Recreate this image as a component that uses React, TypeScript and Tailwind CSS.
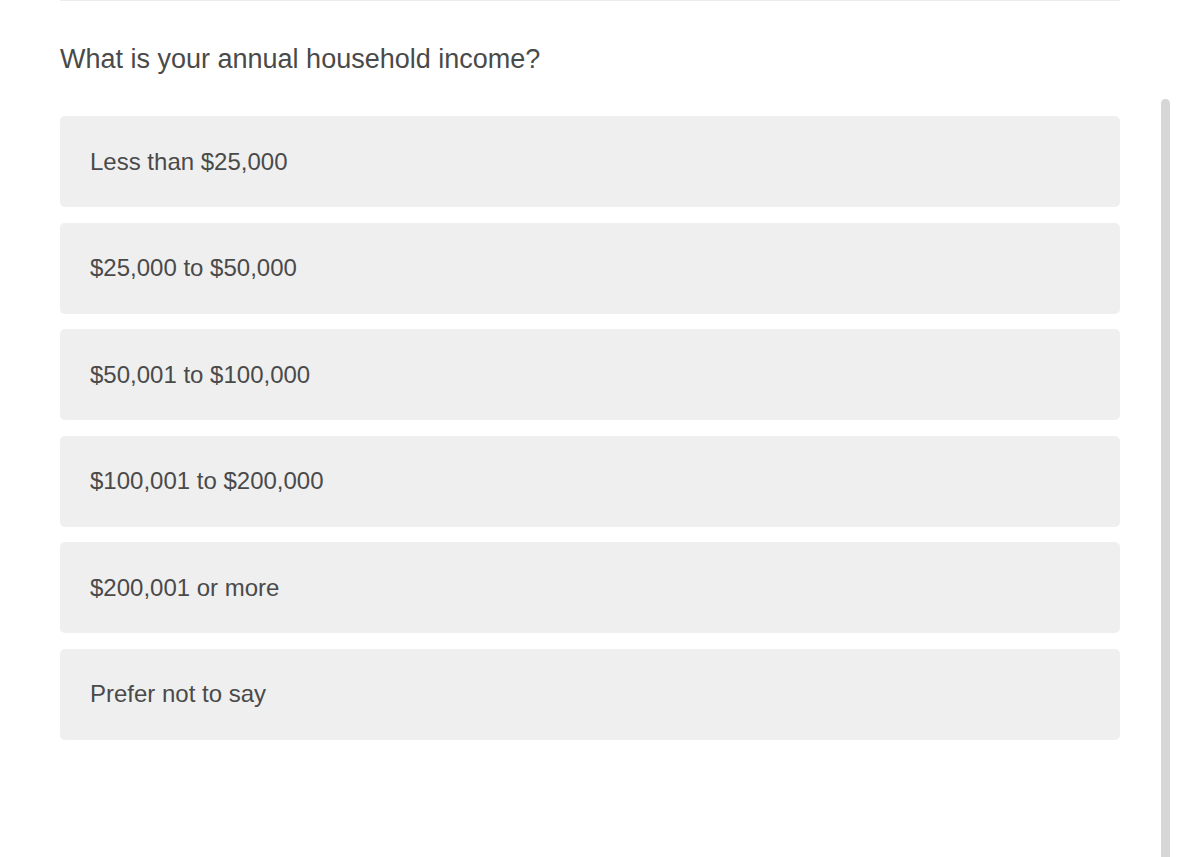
import React from "react";

const options = [
  "Less than $25,000",
  "$25,000 to $50,000",
  "$50,001 to $100,000",
  "$100,001 to $200,000",
  "$200,001 or more",
  "Prefer not to say",
];

export default function App() {
  return (
    <div
      className="relative h-[857px] w-[1179px] overflow-hidden bg-white"
      style={{ fontFamily: '"Liberation Sans", Arial, sans-serif' }}
    >
      <div className="ml-[60px] w-[1060px]">
        <div className="h-px bg-[#ececec]" />
        <h1 className="mt-[42px] text-[27px] leading-[32px] text-[#4a4a4a]">
          What is your annual household income?
        </h1>
        <div className="mt-[41px] flex flex-col gap-[15.5px]">
          {options.map((o) => (
            <div
              key={o}
              className="flex h-[91px] items-center rounded-[5px] bg-[#efefef] pl-[30px] text-[24px] text-[#4a4a4a]"
            >
              {o}
            </div>
          ))}
        </div>
      </div>
      <div className="absolute left-[1161px] top-[99px] h-[770px] w-[9px] rounded-t-full bg-[#d6d6d6]" />
    </div>
  );
}
